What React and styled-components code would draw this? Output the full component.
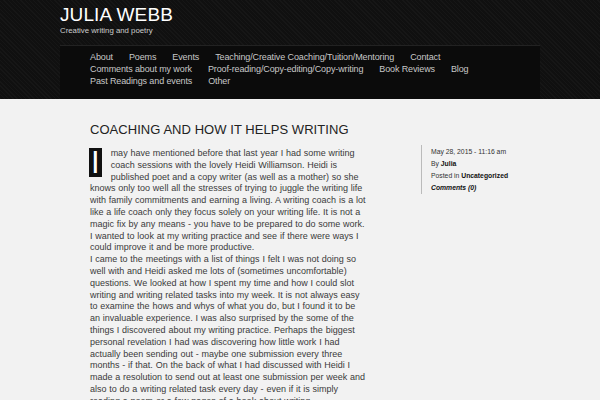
import React from 'react';
import styled, { createGlobalStyle } from 'styled-components';

const Global = createGlobalStyle`
  html, body {
    margin: 0;
    padding: 0;
    overflow: hidden;
    background: #f2f2f2;
  }
  body {
    font-family: "Liberation Sans", Arial, sans-serif;
  }
`;

const Header = styled.header`
  background: repeating-linear-gradient(
    45deg,
    #161616 0,
    #161616 1px,
    #101010 1px,
    #101010 3px
  );
  height: 99px;
  padding: 0 60px;
  box-sizing: border-box;
  display: flex;
  flex-direction: column;
`;

const Brand = styled.div`
  padding-top: 4px;
  height: 45px;
  box-sizing: border-box;
`;

const Title = styled.h1`
  margin: 0;
  color: #fff;
  font-weight: normal;
  font-size: 19px;
  line-height: 21px;
  letter-spacing: 0.1px;
`;

const Tagline = styled.p`
  margin: 1px 0 0;
  color: #ccc;
  font-size: 7.8px;
  line-height: 9px;
`;

const NavBox = styled.nav`
  flex: 1;
  background: #0b0b0b;
  border-top: 1px solid #222;
  padding: 5px 30px 0;
`;

const NavList = styled.ul`
  list-style: none;
  margin: 0;
  padding: 0;
  display: flex;
  flex-wrap: wrap;
  column-gap: 16px;
  max-width: 400px;
`;

const NavItem = styled.li`
  color: #c8c8c8;
  font-size: 9px;
  line-height: 12px;
  letter-spacing: -0.12px;
`;

const Main = styled.main`
  display: flex;
  padding: 23px 0 0 90px;
  gap: 54px;
`;

const Article = styled.article`
  width: 277px;
`;

const PostTitle = styled.h2`
  margin: 0 0 10px;
  color: #222;
  font-weight: normal;
  font-size: 13px;
  line-height: 16px;
  letter-spacing: 0.05px;
`;

const Para = styled.p`
  margin: 0;
  color: #3a3a3a;
  font-size: 9px;
  line-height: 11.8px;
  word-spacing: 0.28px;
`;

const DropCap = styled.span`
  float: left;
  background: #111;
  color: #fff;
  font-size: 31px;
  line-height: 29px;
  height: 29px;
  padding: 0 2px;
  margin: 0 9px 0 -1px;
`;

const Meta = styled.aside`
  margin-top: 23px;
  border-left: 1px solid #bbb;
  padding: 1px 0 2px 9px;
  height: 46px;
`;

const MetaLine = styled.div`
  color: #333;
  font-size: 6.8px;
  line-height: 12px;
  font-style: ${(p) => (p.$italic ? 'italic' : 'normal')};
`;

const Strong = styled.span`
  color: #111;
  font-weight: bold;
`;

const navItems = [
  'About',
  'Poems',
  'Events',
  'Teaching/Creative Coaching/Tuition/Mentoring',
  'Contact',
  'Comments about my work',
  'Proof-reading/Copy-editing/Copy-writing',
  'Book Reviews',
  'Blog',
  'Past Readings and events',
  'Other',
];

export default function App() {
  return (
    <>
      <Global />
      <Header>
        <Brand>
          <Title>JULIA WEBB</Title>
          <Tagline>Creative writing and poetry</Tagline>
        </Brand>
        <NavBox>
          <NavList>
            {navItems.map((item) => (
              <NavItem key={item}>{item}</NavItem>
            ))}
          </NavList>
        </NavBox>
      </Header>
      <Main>
        <Article>
          <PostTitle>COACHING AND HOW IT HELPS WRITING</PostTitle>
          <Para>
            <DropCap>I</DropCap>
            may have mentioned before that last year I had some writing coach
            sessions with the lovely Heidi Williamson. Heidi is published poet
            and a copy writer (as well as a mother) so she knows only too well
            all the stresses of trying to juggle the writing life with family
            commitments and earning a living. A writing coach is a lot like a
            life coach only they focus solely on your writing life. It is not a
            magic fix by any means - you have to be prepared to do some work.
            <br />I wanted to look at my writing practice and see if there were
            ways I could improve it and be more productive.
          </Para>
          <Para>
            I came to the meetings with a list of things I felt I was not doing
            so well with and Heidi asked me lots of (sometimes uncomfortable)
            questions. We looked at how I spent my time and how I could slot
            writing and writing related tasks into my week. It is not always
            easy to examine the hows and whys of what you do, but I found it to
            be an invaluable experience. I was also surprised by the some of
            the things I discovered about my writing practice. Perhaps the
            biggest personal revelation I had was discovering how little work I
            had actually been sending out - maybe one submission every three
            months - if that. On the back of what I had discussed with Heidi I
            made a resolution to send out at least one submission per week and
            also to do a writing related task every day - even if it is simply
            reading a poem or a few pages of a book about writing.
          </Para>
        </Article>
        <Meta>
          <MetaLine>May 28, 2015 - 11:16 am</MetaLine>
          <MetaLine>
            By <Strong>Julia</Strong>
          </MetaLine>
          <MetaLine>
            Posted in <Strong>Uncategorized</Strong>
          </MetaLine>
          <MetaLine $italic>
            <Strong>Comments (0)</Strong>
          </MetaLine>
        </Meta>
      </Main>
    </>
  );
}
